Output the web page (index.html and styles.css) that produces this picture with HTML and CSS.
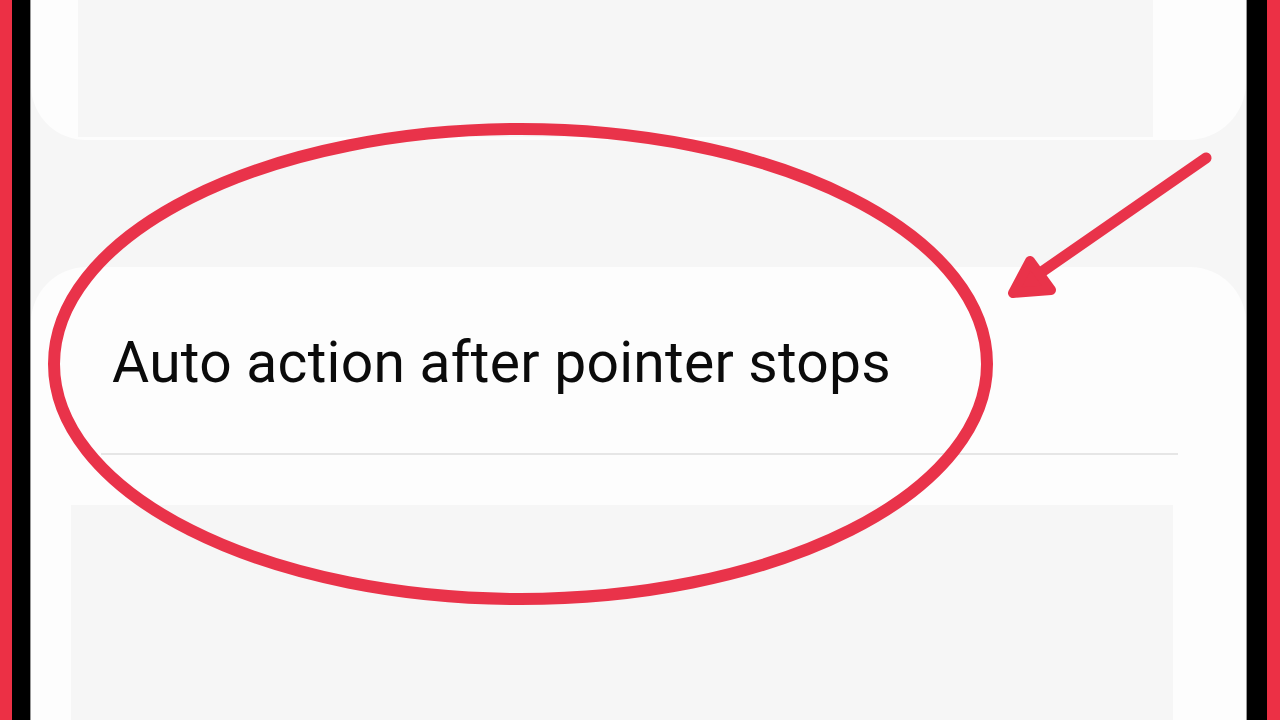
FILE: index.html
```html
<!DOCTYPE html>
<html lang="en">
<head>
<meta charset="utf-8">
<title>Auto action after pointer stops</title>
<link rel="stylesheet" href="styles.css">
</head>
<body>
<div class="frame">
  <div class="edge-red edge-left"></div>
  <div class="bezel bezel-left"></div>
  <main class="screen">
    <section class="card card-top">
      <div class="card-top-inner"></div>
    </section>
    <section class="card card-main">
      <div class="row-title">Auto action after pointer stops</div>
      <div class="divider"></div>
      <div class="card-main-inner"></div>
    </section>
  </main>
  <div class="bezel bezel-right"></div>
  <div class="edge-red edge-right"></div>
</div>
<svg class="annotation" width="1280" height="720" viewBox="0 0 1280 720" aria-hidden="true">
  <ellipse cx="520.5" cy="364" rx="466.5" ry="235" fill="none" stroke="#e9334a" stroke-width="12"/>
  <line x1="1206" y1="158" x2="1020" y2="287" stroke="#e9334a" stroke-width="11" stroke-linecap="round"/>
  <path d="M1030 261 L1013 293 L1051 290 Z" fill="#e9334a" stroke="#e9334a" stroke-width="10" stroke-linejoin="round"/>
</svg>
</body>
</html>
```

FILE: styles.css
```css
html, body {
  margin: 0;
  padding: 0;
  width: 1280px;
  height: 720px;
  overflow: hidden;
  background: #f6f6f6;
}

.frame {
  display: flex;
  width: 1280px;
  height: 720px;
}

.edge-red {
  background: #ec3045;
  flex: none;
}
.edge-left { width: 12px; }
.edge-right { width: 13px; }

.bezel {
  background: #000;
  flex: none;
}
.bezel-left { width: 18px; border-right: 1px solid #9a9a9a; }
.bezel-right { width: 20px; border-left: 1px solid #9a9a9a; }

.screen {
  flex: 1;
  display: flex;
  flex-direction: column;
  background: #f6f6f6;
  min-width: 0;
}

.card {
  background: #fdfdfd;
}

.card-top {
  height: 140px;
  flex: none;
  border-radius: 0 0 58px 55px;
  padding: 0 93px 3px 47px;
  box-sizing: border-box;
  display: flex;
}
.card-top-inner {
  flex: 1;
  background: #f6f6f6;
}

.card-main {
  margin-top: 127px;
  flex: 1;
  border-radius: 56px 56px 0 0;
  display: flex;
  flex-direction: column;
}

.row-title {
  font-family: Roboto, "Noto Sans", sans-serif;
  font-size: 57px;
  line-height: normal;
  letter-spacing: 0.25px;
  color: #0b0b0b;
  padding: 62px 0 57px 81px;
  white-space: nowrap;
}

.divider {
  height: 2px;
  background: #e6e6e6;
  margin: 0 68px 0 70px;
}

.card-main-inner {
  flex: 1;
  background: #f6f6f6;
  margin: 50px 73px 0 40px;
}

.annotation {
  position: absolute;
  left: 0;
  top: 0;
  pointer-events: none;
}
```
